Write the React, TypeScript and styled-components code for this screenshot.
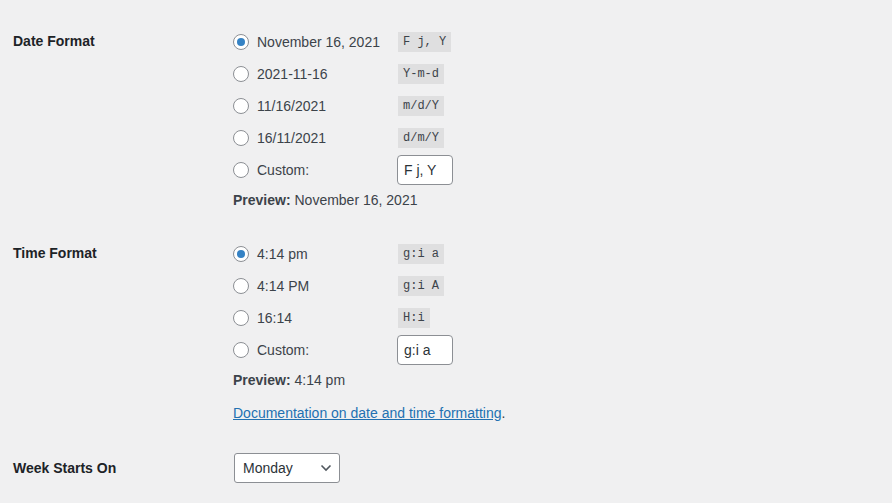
import React from "react";
import styled, { createGlobalStyle } from "styled-components";

const Global = createGlobalStyle`
  html, body { margin: 0; padding: 0; background: #f0f0f1; }
  body {
    font-family: "Liberation Sans", Arial, sans-serif;
    font-size: 14px;
    color: #3c434a;
  }
`;

const Page = styled.div`
  padding: 26px 0 0 13px;
  width: 879px;
  height: 477px;
  overflow: hidden;
`;

const Section = styled.section<{ $gap?: number; $center?: boolean }>`
  display: grid;
  grid-template-columns: 220px 1fr;
  align-items: ${(p) => (p.$center ? "center" : "start")};
  margin-top: ${(p) => p.$gap ?? 0}px;
`;

const Th = styled.div<{ $center?: boolean }>`
  font-weight: bold;
  color: #1d2327;
  line-height: ${(p) => (p.$center ? "20px" : "31px")};
`;

const Fieldset = styled.div`
  display: flex;
  flex-direction: column;
`;

const OptionRow = styled.label<{ $h?: number }>`
  display: flex;
  align-items: center;
  height: ${(p) => p.$h ?? 32}px;
`;

const Radio = styled.input.attrs({ type: "radio" })`
  appearance: none;
  -webkit-appearance: none;
  margin: 0 8px 0 0;
  width: 16px;
  height: 16px;
  border: 1px solid #8c8f94;
  border-radius: 50%;
  background: #fff;
  box-sizing: border-box;
  display: grid;
  place-items: center;
  flex: none;
  &:checked::before {
    content: "";
    width: 8px;
    height: 8px;
    border-radius: 50%;
    background: #3582c4;
  }
`;

const OptionText = styled.span`
  display: inline-block;
  width: 141px;
  color: #3c434a;
`;

const Code = styled.code`
  font-family: "Liberation Mono", Consolas, monospace;
  font-size: 12px;
  line-height: 15px;
  padding: 3px 5px 2px;
  background: rgba(0, 0, 0, 0.07);
  color: #3c434a;
  white-space: pre;
`;

const SmallInput = styled.input`
  width: 56px;
  height: 30px;
  box-sizing: border-box;
  border: 1px solid #8c8f94;
  border-radius: 4px;
  background: #fff;
  padding: 0 6px;
  margin: 0 0 0 -1px;
  font-family: "Liberation Sans", Arial, sans-serif;
  font-size: 14px;
  color: #2c3338;
  outline: none;
`;

const Preview = styled.p`
  margin: 5px 0 0;
  line-height: 20px;
  color: #3c434a;
  strong {
    color: #3c434a;
  }
`;

const DocLink = styled.p`
  margin: 13px 0 0;
  line-height: 20px;
  a {
    color: #2271b1;
    text-decoration: underline;
  }
`;

const SelectWrap = styled.div`
  position: relative;
  width: 106px;
  margin-left: 1px;
`;

const Select = styled.select`
  appearance: none;
  -webkit-appearance: none;
  width: 106px;
  height: 30px;
  box-sizing: border-box;
  border: 1px solid #8c8f94;
  border-radius: 3px;
  background: #fff;
  padding: 0 24px 0 8px;
  font-family: "Liberation Sans", Arial, sans-serif;
  font-size: 14px;
  color: #2c3338;
  outline: none;
`;

const Chevron = styled.svg`
  position: absolute;
  right: 8px;
  top: 11px;
  pointer-events: none;
`;

type Opt = { text: string; code: string; checked?: boolean };

const dateOpts: Opt[] = [
  { text: "November 16, 2021", code: "F j, Y", checked: true },
  { text: "2021-11-16", code: "Y-m-d" },
  { text: "11/16/2021", code: "m/d/Y" },
  { text: "16/11/2021", code: "d/m/Y" },
];

const timeOpts: Opt[] = [
  { text: "4:14 pm", code: "g:i a", checked: true },
  { text: "4:14 PM", code: "g:i A" },
  { text: "16:14", code: "H:i" },
];

function Options({ name, opts, custom }: { name: string; opts: Opt[]; custom: string }) {
  return (
    <>
      {opts.map((o) => (
        <OptionRow key={o.code}>
          <Radio name={name} defaultChecked={o.checked} />
          <OptionText>{o.text}</OptionText>
          <Code>{o.code}</Code>
        </OptionRow>
      ))}
      <OptionRow $h={31}>
        <Radio name={name} />
        <OptionText>Custom:</OptionText>
        <SmallInput defaultValue={custom} />
      </OptionRow>
    </>
  );
}

export default function App() {
  return (
    <>
      <Global />
      <Page>
        <Section>
          <Th>Date Format</Th>
          <Fieldset>
            <Options name="date" opts={dateOpts} custom="F j, Y" />
            <Preview>
              <strong>Preview:</strong> November 16, 2021
            </Preview>
          </Fieldset>
        </Section>
        <Section $gap={28}>
          <Th>Time Format</Th>
          <Fieldset>
            <Options name="time" opts={timeOpts} custom="g:i a" />
            <Preview>
              <strong>Preview:</strong> 4:14 pm
            </Preview>
            <DocLink>
              <a href="#">Documentation on date and time formatting</a>.
            </DocLink>
          </Fieldset>
        </Section>
        <Section $gap={30} $center>
          <Th $center>Week Starts On</Th>
          <SelectWrap>
            <Select defaultValue="1">
              <option value="0">Sunday</option>
              <option value="1">Monday</option>
              <option value="2">Tuesday</option>
            </Select>
            <Chevron width="12" height="8" viewBox="0 0 12 8">
              <path d="M1.5 1.5 L6 6 L10.5 1.5" fill="none" stroke="#50575e" strokeWidth="1.6" />
            </Chevron>
          </SelectWrap>
        </Section>
      </Page>
    </>
  );
}
